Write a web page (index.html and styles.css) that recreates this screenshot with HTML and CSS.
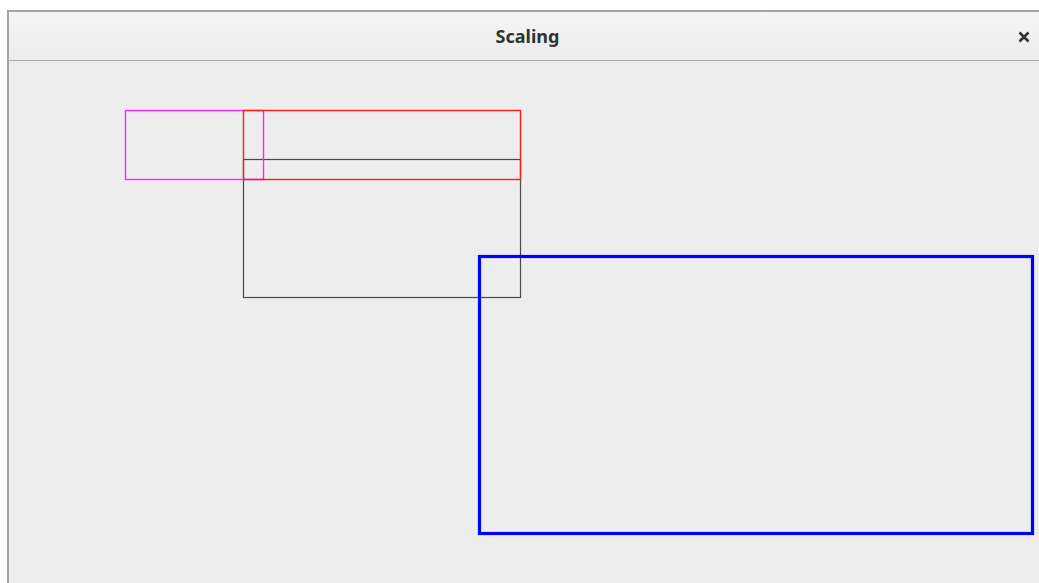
FILE: index.html
```
<!DOCTYPE html>
<html>
<head>
<meta charset="utf-8">
<title>Scaling</title>
<link rel="stylesheet" href="styles.css">
</head>
<body>

<div class="window">
	<div class="titlebar">
		<span class="title">Scaling</span>
		<span class="close" title="Close">
			<svg width="12" height="12" viewBox="0 0 12 12">
				<path d="M1.5 1.5 L10.5 10.5 M10.5 1.5 L1.5 10.5" stroke="#2e3436" stroke-width="2.6" stroke-linecap="butt"/>
			</svg>
		</span>
	</div>
	<div class="canvas">
		<!-- shapes drawn in canvas coordinates -->
		<svg class="drawing" width="1040" height="530">
			<rect x="234.5" y="98.5" width="277" height="138" fill="none" stroke="#4a4a4a" stroke-width="1.2"/>
			<rect x="116.5" y="49.5" width="138" height="69" fill="none" stroke="#ff22ff" stroke-width="1.4"/>
			<rect x="234.5" y="49.5" width="277" height="69" fill="none" stroke="#ff1a1a" stroke-width="1.4"/>
			<rect x="470.5" y="195.5" width="553" height="277" fill="none" stroke="#0000ff" stroke-width="3.2"/>
		</svg>
	</div>
</div>

</body>
</html>
```

FILE: styles.css
```
HTML {
	margin:0px;
	padding:0px;
}

BODY {
	margin:0px;
	padding:10px 0px 0px 7px;
	background:#ffffff;
	overflow:hidden;
	height:583px;
	box-sizing:border-box;
}

.window {
	width:1040px;
	height:573px;
	display:flex;
	flex-direction:column;
	border-top:2px solid #a4a4a4;
	border-left:2px solid #a4a4a4;
	background:#ededed;
}

.titlebar {
	height:48px;
	flex:none;
	display:flex;
	align-items:center;
	justify-content:center;
	position:relative;
	background:linear-gradient(#f5f5f5, #ececec);
	border-bottom:1px solid #a8a8a8;
	box-shadow:0px 1px 0px #dedede;
}

.title {
	font-family:"Noto Sans", "DejaVu Sans", sans-serif;
	font-weight:bold;
	font-size:18px;
	color:#2e3436;
	margin-top:-1px;
	margin-right:3px;
}

.close {
	position:absolute;
	left:1009px;
	top:19px;
	width:12px;
	height:12px;
	line-height:0;
}

.canvas {
	flex:1;
	position:relative;
	background:#ededed;
}

.drawing {
	position:absolute;
	left:0px;
	top:0px;
}
```
